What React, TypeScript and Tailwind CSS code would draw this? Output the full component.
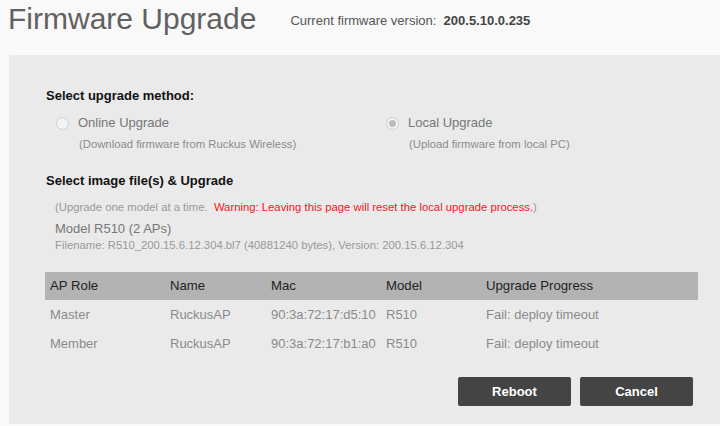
const ROWS = [
  { role: "Master", name: "RuckusAP", mac: "90:3a:72:17:d5:10", model: "R510", progress: "Fail: deploy timeout" },
  { role: "Member", name: "RuckusAP", mac: "90:3a:72:17:b1:a0", model: "R510", progress: "Fail: deploy timeout" },
];

const COLS = "grid grid-cols-[120px_101px_115px_100px_1fr] pl-[5px]";

function Radio({ checked }: { checked?: boolean }) {
  return (
    <span className="flex h-[13px] w-[13px] shrink-0 items-center justify-center rounded-full border border-[#d0d0d0] bg-[#f3f3f3]">
      {checked && <span className="h-[7px] w-[7px] rounded-full bg-[#bdbdbd]" />}
    </span>
  );
}

function Method({ label, note, checked }: { label: string; note: string; checked?: boolean }) {
  return (
    <div>
      <div className="flex h-[18px] items-center gap-[9px]">
        <Radio checked={checked} />
        <span className="text-[13px] text-[#777]">{label}</span>
      </div>
      <div className="mt-[5px] pl-[23px] text-[11.3px] leading-[14px] text-[#8c8c8c]">{note}</div>
    </div>
  );
}

export default function App() {
  return (
    <div className="h-[426px] w-[720px] overflow-hidden bg-[#f9f9f9] font-['Liberation_Sans',Arial,sans-serif]">
      <header className="flex h-[55px] items-start pl-[8px] pt-[2px]">
        <h1 className="text-[30px] leading-[34px] text-[#616161]">Firmware Upgrade</h1>
        <div className="ml-[34px] mt-[11px] text-[13px] leading-4 text-[#555]">
          Current firmware version:&nbsp;&nbsp;<b className="text-[#444]">200.5.10.0.235</b>
        </div>
      </header>

      <main className="ml-[9px] h-[369px] bg-[#eaeaea] pl-[37px] pr-[22px] pt-[33px]">
        <h2 className="text-[13px] font-bold leading-4 text-[#111]">Select upgrade method:</h2>
        <div className="mt-[10px] flex pl-[10px]">
          <div className="w-[330px]">
            <Method label="Online Upgrade" note="(Download firmware from Ruckus Wireless)" />
          </div>
          <Method label="Local Upgrade" note="(Upload firmware from local PC)" checked />
        </div>

        <h2 className="mt-[22px] text-[13px] font-bold leading-4 text-[#111]">Select image file(s) &amp; Upgrade</h2>
        <p className="mt-[11px] pl-[9px] text-[11.3px] leading-[14px] text-[#999]">
          (Upgrade one model at a time.&nbsp;&nbsp;
          <span className="text-[#f5161f]">Warning: Leaving this page will reset the local upgrade process.</span>)
        </p>
        <p className="mt-[7px] pl-[9px] text-[13px] leading-4 text-[#777]">Model R510 (2 APs)</p>
        <p className="mt-px pl-[9px] text-[11.3px] leading-[14px] text-[#999]">
          Filename: R510_200.15.6.12.304.bl7 (40881240 bytes), Version: 200.15.6.12.304
        </p>

        <div className="mt-[20px] -ml-px">
          <div className={`${COLS} h-[28px] items-center bg-[#b3b3b3] text-[13.2px] text-[#222]`}>
            <span>AP Role</span>
            <span>Name</span>
            <span>Mac</span>
            <span>Model</span>
            <span>Upgrade Progress</span>
          </div>
          {ROWS.map((r) => (
            <div key={r.mac} className={`${COLS} h-[29px] items-center text-[13px] text-[#8a8a8a]`}>
              <span>{r.role}</span>
              <span>{r.name}</span>
              <span>{r.mac}</span>
              <span>{r.model}</span>
              <span>{r.progress}</span>
            </div>
          ))}
        </div>

        <div className="mr-[5px] mt-[19px] flex justify-end gap-[9px]">
          <button className="h-[29px] w-[113px] rounded-[2px] bg-[#444] text-[13px] font-bold text-white">Reboot</button>
          <button className="h-[29px] w-[113px] rounded-[2px] bg-[#444] text-[13px] font-bold text-white">Cancel</button>
        </div>
      </main>
    </div>
  );
}
